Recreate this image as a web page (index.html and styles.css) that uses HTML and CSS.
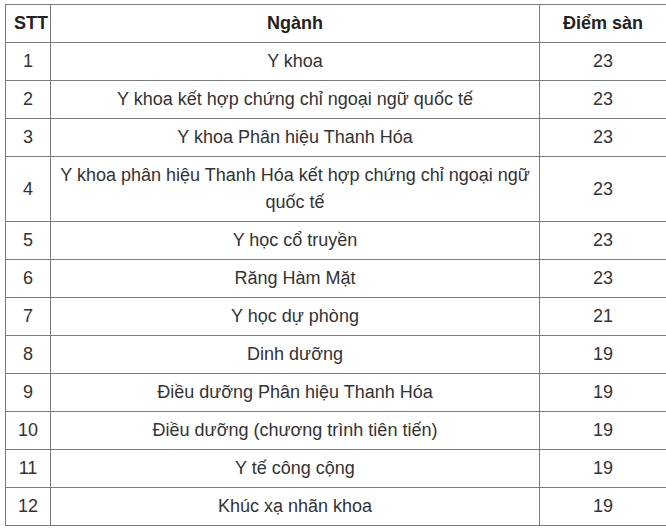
FILE: index.html
```html
<!DOCTYPE html>
<html lang="vi">
<head>
<meta charset="utf-8">
<link rel="stylesheet" href="styles.css">
</head>
<body>
<table class="score-table">
  <colgroup>
    <col class="col-stt">
    <col class="col-name">
    <col class="col-score">
  </colgroup>
  <thead>
    <tr><th>STT</th><th>Ngành</th><th>Điểm sàn</th></tr>
  </thead>
  <tbody>
    <tr><td>1</td><td>Y khoa</td><td>23</td></tr>
    <tr><td>2</td><td>Y khoa kết hợp chứng chỉ ngoại ngữ quốc tế</td><td>23</td></tr>
    <tr><td>3</td><td>Y khoa Phân hiệu Thanh Hóa</td><td>23</td></tr>
    <tr><td>4</td><td>Y khoa phân hiệu Thanh Hóa kết hợp chứng chỉ ngoại ngữ quốc tế</td><td>23</td></tr>
    <tr><td>5</td><td>Y học cổ truyền</td><td>23</td></tr>
    <tr><td>6</td><td>Răng Hàm Mặt</td><td>23</td></tr>
    <tr><td>7</td><td>Y học dự phòng</td><td>21</td></tr>
    <tr><td>8</td><td>Dinh dưỡng</td><td>19</td></tr>
    <tr><td>9</td><td>Điều dưỡng Phân hiệu Thanh Hóa</td><td>19</td></tr>
    <tr><td>10</td><td>Điều dưỡng (chương trình tiên tiến)</td><td>19</td></tr>
    <tr><td>11</td><td>Y tế công cộng</td><td>19</td></tr>
    <tr><td>12</td><td>Khúc xạ nhãn khoa</td><td>19</td></tr>
  </tbody>
</table>
</body>
</html>
```
FILE: styles.css
```css
html, body {
  margin: 0;
  background: #fff;
}
body {
  padding: 4px 0 0 5px;
  font-family: "Liberation Sans", Arial, sans-serif;
  color: #333;
}
.score-table {
  border-collapse: collapse;
  width: 661px;
  table-layout: fixed;
  font-size: 18px;
  line-height: 27px;
}
.col-stt { width: 45px; }
.col-name { width: 489px; }
.col-score { width: 127px; }
.score-table th,
.score-table td {
  border: 1px solid #7a7a7a;
  padding: 5px 8px;
  text-align: center;
  vertical-align: middle;
}
.score-table th {
  font-weight: bold;
  color: #222;
}
```
